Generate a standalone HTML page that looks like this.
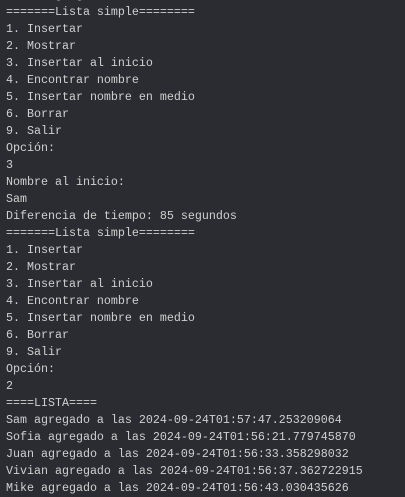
<!DOCTYPE html>
<html><head><meta charset="utf-8"><style>
html,body{margin:0;padding:0;background:#2a2c31;width:405px;height:497px;overflow:hidden}
pre{margin:0;position:absolute;left:6px;top:-13px;font-family:"Liberation Mono",monospace;font-size:11.67px;line-height:17px;color:#d0d0d0}
</style></head><body><pre>       g  g
=======Lista simple========
1. Insertar
2. Mostrar
3. Insertar al inicio
4. Encontrar nombre
5. Insertar nombre en medio
6. Borrar
9. Salir
Opción:
3
Nombre al inicio:
Sam
Diferencia de tiempo: 85 segundos
=======Lista simple========
1. Insertar
2. Mostrar
3. Insertar al inicio
4. Encontrar nombre
5. Insertar nombre en medio
6. Borrar
9. Salir
Opción:
2
====LISTA====
Sam agregado a las 2024-09-24T01:57:47.253209064
Sofia agregado a las 2024-09-24T01:56:21.779745870
Juan agregado a las 2024-09-24T01:56:33.358298032
Vivian agregado a las 2024-09-24T01:56:37.362722915
Mike agregado a las 2024-09-24T01:56:43.030435626</pre></body></html>
